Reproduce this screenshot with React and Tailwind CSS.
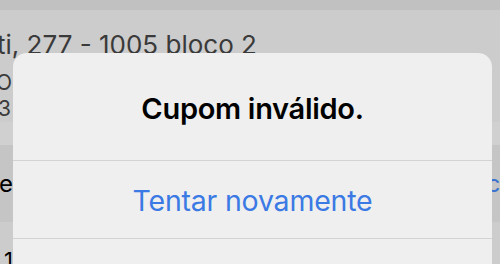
import React from "react";

function Background() {
  return (
    <div className="flex flex-col">
      <div className="h-[10px] bg-[#c1c1c1]" />
      <div className="flex flex-col pt-[10px] text-[#3a3a3a]">
        <div className="ml-[-3px] h-[50px] whitespace-nowrap text-[26px] leading-[50px]">
          ti, 277 - 1005 bloco 2
        </div>
        <div className="ml-[-4px] h-[26px] whitespace-nowrap text-[21px] leading-[26px]">
          O
        </div>
        <div className="ml-[-2px] h-[26px] whitespace-nowrap text-[21px] leading-[26px]">
          3
        </div>
      </div>
      <div className="h-[23px] bg-[#d0d0d0]" />
      <div className="flex h-[77px] items-center justify-between bg-[#c5c5c5]">
        <span className="ml-[-1px] text-[24px] text-black">e</span>
        <span className="mr-[-14px] text-[24px] text-[#3b72cf]">ca</span>
      </div>
      <div className="flex h-[42px] items-end pl-[4px] text-[22px] leading-[20px] text-black">
        <span className="translate-y-[6px]">1</span>
      </div>
    </div>
  );
}

function Alert() {
  return (
    <div className="absolute left-[13px] top-[53px] w-[479px] overflow-hidden rounded-[14px] bg-[#efefef]">
      <div className="flex h-[107px] items-center justify-center pt-[4px]">
        <span className="text-[29px] font-semibold tracking-[-0.3px] text-black">
          Cupom inválido.
        </span>
      </div>
      <div className="h-px bg-[#d3d3d3]" />
      <div className="flex h-[77px] items-center justify-center pt-[3px]">
        <span className="text-[28.5px] tracking-[-0.2px] text-[#3b7ae4]">
          Tentar novamente
        </span>
      </div>
      <div className="h-px bg-[#d3d3d3]" />
      <div className="h-[40px]" />
    </div>
  );
}

export default function App() {
  return (
    <div className="relative h-[264px] w-[500px] overflow-hidden bg-[#cccccc] font-['Inter',sans-serif]">
      <Background />
      <Alert />
    </div>
  );
}
